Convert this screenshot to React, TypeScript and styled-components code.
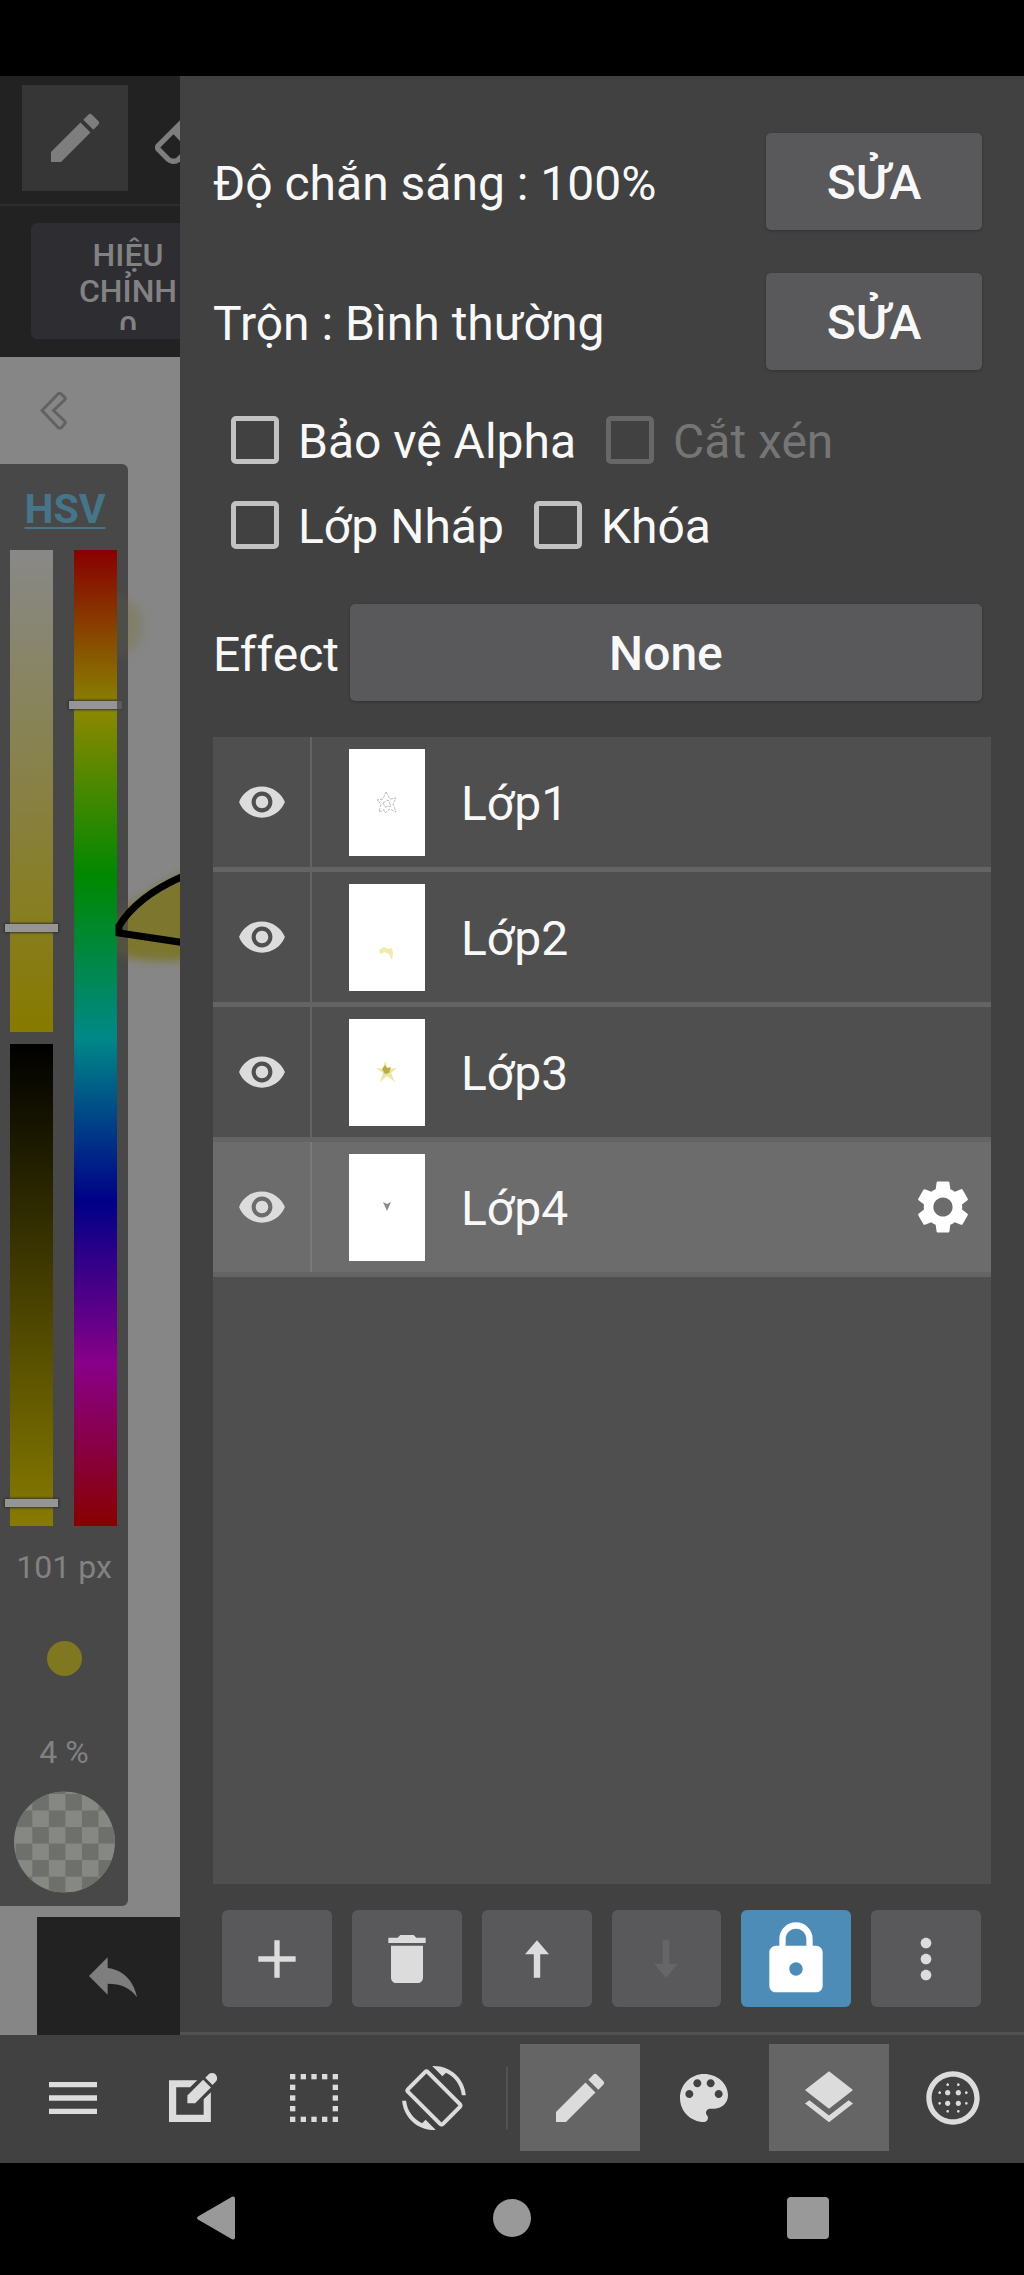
import React from "react";
import styled, { createGlobalStyle, css } from "styled-components";
import {
  MdAdd,
  MdBlurCircular,
  MdDelete,
  MdEdit,
  MdLayers,
  MdLock,
  MdMenu,
  MdMoreVert,
  MdReply,
  MdScreenRotation,
  MdSettings,
  MdVisibility,
} from "react-icons/md";

const GlobalStyle = createGlobalStyle`
  *, *::before, *::after { box-sizing: border-box; }
  body { margin: 0; background: #000; }
  button { border: 0; padding: 0; margin: 0; background: none; color: inherit; font: inherit; cursor: pointer; }
  input { margin: 0; }
  svg { display: block; flex: none; }
`;

const Screen = styled.div`
  display: flex;
  flex-direction: column;
  min-height: 100vh;
  background: #000;
  color: #f8f8f8;
  font-family: Roboto, "Noto Sans", sans-serif;
  font-size: 48px;
  line-height: 56px;
`;

const StatusBar = styled.div`
  height: 76px;
`;

const Workspace = styled.main`
  flex: 1;
  display: flex;
`;

/* ---------- dimmed canvas side ---------- */

const CanvasSide = styled.section`
  flex: none;
  width: 180px;
  display: flex;
  flex-direction: column;
  overflow: hidden;
  background: #868686;
  color: #828282;
  font-size: 32px;
  line-height: 38px;
`;

const ToolStrip = styled.div`
  display: flex;
  padding: 9px 0 13px 22px;
  background: #222;
  border-bottom: 2px solid #2d2d2d;
`;

const DimTool = styled.button<{ $active?: boolean }>`
  flex: none;
  display: grid;
  place-items: center;
  width: 106px;
  height: 106px;
  background: ${(p) => (p.$active ? "#363636" : "transparent")};
  color: #7e7e7e;
`;

const OptionStrip = styled.div`
  padding: 17px 0 18px 31px;
  background: #222;
`;

const AdjustButton = styled.button`
  display: block;
  width: 194px;
  height: 116px;
  padding: 14px 42px 9px;
  border-radius: 6px;
  background: #2e2e32;
  font-weight: 500;
  line-height: 36px;
`;

const AdjustText = styled.span`
  display: block;
  height: 93px;
  overflow: hidden;
`;

const Canvas = styled.div`
  flex: 1;
  position: relative;
  display: flex;
  flex-direction: column;
  align-items: flex-start;
`;

const Sketch = styled.svg`
  position: absolute;
  left: 0;
  top: 0;
  pointer-events: none;
`;

const CollapseButton = styled.button`
  padding: 34px 40px;
`;

const ColorPanel = styled.div`
  display: flex;
  flex-direction: column;
  align-items: center;
  width: 128px;
  padding: 20px 0 13px;
  border-radius: 0 6px 6px 0;
  background: #484848;
`;

const ModeButton = styled.button`
  padding-left: 2px;
  color: #46758a;
  font-size: 41px;
  font-weight: 700;
  line-height: 50px;
  text-decoration: underline;
  text-decoration-thickness: 2px;
  text-underline-offset: 4px;
`;

const Sliders = styled.div`
  display: flex;
  gap: 11px;
  height: 976px;
  margin: 16px 0 22px;
  padding-right: 2px;
`;

const SliderColumn = styled.div`
  display: flex;
  flex-direction: column;
  gap: 12px;
`;

const thumb = css`
  appearance: none;
  width: 53px;
  height: 8px;
  border: 0;
  border-radius: 0;
  background: #959595;
  box-shadow: 0 0 2px 1px #333;
`;

const ColorSlider = styled.input<{ $ramp: string }>`
  appearance: none;
  writing-mode: vertical-lr;
  flex: 1;
  width: 53px;
  min-height: 0;
  background: linear-gradient(${(p) => p.$ramp}) center / 43px 100% no-repeat;
  &::-webkit-slider-thumb {
    ${thumb}
  }
`;

const BrushDot = styled.span`
  width: 35px;
  height: 35px;
  margin: 55px 0 57px;
  border-radius: 50%;
  background: #7f7820;
`;

const Swatch = styled.button`
  margin-top: 20px;
`;

const UndoButton = styled.button`
  flex: 1;
  display: grid;
  place-items: center;
  width: 151px;
  min-height: 118px;
  margin: 11px 0 0 37px;
  background: #222;
  color: #7e7e7e;
`;

/* ---------- layers panel ---------- */

const LayersPanel = styled.section`
  flex: 1;
  display: flex;
  flex-direction: column;
  padding: 57px 33px 25px;
  border-bottom: 3px solid #525252;
  background: #414141;
`;

const Text = styled.span`
  padding-top: 4px;
`;

const SettingRow = styled.div`
  display: flex;
  align-items: center;
  justify-content: space-between;
  margin-bottom: 43px;
  padding-right: 9px;
`;

const FlatButton = styled.button`
  width: 216px;
  height: 97px;
  padding-top: 2px;
  border-radius: 5px;
  background: #59595b;
  box-shadow: 0 1px 3px rgba(0, 0, 0, 0.25);
  font-weight: 500;
`;

const Checks = styled.div`
  display: flex;
  flex-direction: column;
  margin: -16px 0 37px;
  padding-left: 18px;
`;

const CheckRow = styled.div`
  display: flex;
  gap: 30px;
  height: 85px;
`;

const Check = styled.label<{ $off?: boolean }>`
  display: flex;
  align-items: center;
  gap: 19px;
  color: ${(p) => (p.$off ? "#757575" : "inherit")};
`;

const Box = styled.input`
  appearance: none;
  width: 48px;
  height: 48px;
  border: 5px solid #c2c2c2;
  border-radius: 5px;
  &:disabled {
    border-color: #676767;
  }
`;

const EffectRow = styled.div`
  display: flex;
  align-items: center;
  gap: 11px;
  margin-bottom: 36px;
  padding-right: 9px;
`;

const EffectButton = styled(FlatButton)`
  flex: 1;
`;

const LayerList = styled.ul`
  flex: 1;
  margin: 0 0 26px;
  padding: 0;
  list-style: none;
  background: #4f4f4f;
`;

const LayerRow = styled.li<{ $selected: boolean }>`
  display: flex;
  align-items: center;
  height: 135px;
  border-bottom: 5px solid #646464;
  background: ${(p) => (p.$selected ? "#6c6c6c" : "transparent")};
`;

const EyeButton = styled.button<{ $selected: boolean }>`
  display: grid;
  place-items: center;
  align-self: stretch;
  width: 99px;
  border-right: 2px solid ${(p) => (p.$selected ? "#7a7a7a" : "#646464")};
  color: #dcdcdc;
`;

const Thumb = styled.svg`
  margin: 0 36px 0 37px;
  background: #fff;
`;

const LayerName = styled(Text)`
  flex: 1;
`;

const GearButton = styled.button`
  margin-right: 16px;
  color: #fff;
`;

const Actions = styled.div`
  display: grid;
  grid-template-columns: repeat(6, 1fr);
  gap: 20px;
  padding: 0 10px 0 9px;
`;

const ActionButton = styled.button<{ $on?: boolean }>`
  display: grid;
  place-items: center;
  height: 97px;
  border-radius: 6px;
  background: ${(p) => (p.$on ? "#4e8cb8" : "#59595b")};
  color: ${(p) => (p.$on ? "#fff" : "#dcdcdc")};
  &:disabled {
    color: #666668;
  }
`;

/* ---------- bottom bars ---------- */

const BottomBar = styled.nav`
  display: flex;
  align-items: center;
  height: 128px;
  padding: 0 11px 3px 13px;
  background: #414141;
  color: #dcdcdc;
`;

const ToolGroup = styled.div<{ $gap?: number }>`
  flex: 1 1 auto;
  display: flex;
  gap: ${(p) => p.$gap ?? 0}px;
`;

const ToolButton = styled.button<{ $active?: boolean }>`
  flex: 1 1 118px;
  display: grid;
  place-items: center;
  height: 107px;
  background: ${(p) => (p.$active ? "#656565" : "transparent")};
`;

const Divider = styled.span`
  width: 2px;
  height: 62px;
  margin: 0 12px;
  background: #525252;
`;

const SystemNav = styled.nav`
  display: flex;
  height: 112px;
  padding: 0 68px 2px;
  color: #999;
`;

const SystemButton = styled.button`
  flex: 1;
  display: grid;
  place-items: center;
`;

const ICON = 64;

const Glyph = ({ children }: { children: React.ReactNode }) => (
  <svg width={ICON} height={ICON} viewBox="0 0 24 24" fill="currentColor">
    {children}
  </svg>
);

const Eraser = () => (
  <Glyph>
    <path d="M16.24 3.56l4.95 4.94c.78.79.78 2.05 0 2.84L12 20.53a4 4 0 0 1-5.66 0L2.81 17c-.78-.79-.78-2.05 0-2.84l10.6-10.6c.79-.78 2.05-.78 2.83 0M4.22 15.58l3.54 3.53c.78.79 2.04.79 2.83 0l3.53-3.53-4.95-4.95z" />
  </Glyph>
);

const ArrowUp = () => (
  <Glyph>
    <path d="M12 5l4.5 5.2h-3.3V19h-2.4v-8.8H7.5z" />
  </Glyph>
);

const ArrowDown = () => (
  <Glyph>
    <path d="M12 19l4.5-5.2h-3.3V5h-2.4v8.8H7.5z" />
  </Glyph>
);

const EditSquare = () => (
  <Glyph>
    <path d="M3 5.3h10.6l-2.7 2.7H5.7v10.3h10.3v-5.800l2.700-2.700V21H3z" />
    <path d="M9.900 11.100l5.900-5.900 2.900 2.900-5.900 5.900H9.900z" />
    <path d="M16.600 4.400l1.200-1.200a1.900 1.900 0 0 1 2.700 2.700l-1.200 1.200z" />
  </Glyph>
);

const Palette = () => (
  <Glyph>
    <path d="M12 3c-4.970 0-9 4.030-9 9s4.030 9 9 9c.83 0 1.500-.67 1.500-1.500 0-.39-.15-.74-.39-1.010-.23-.26-.38-.61-.38-.99 0-.83.67-1.500 1.500-1.500H16c2.760 0 5-2.240 5-5 0-4.420-4.030-8-9-8zm-5.500 9c-.83 0-1.500-.67-1.500-1.500S5.670 9 6.500 9 8 9.670 8 10.500 7.330 12 6.500 12zm3-4C8.670 8 8 7.330 8 6.500S8.670 5 9.500 5s1.500.67 1.500 1.500S10.330 8 9.500 8zm5 0c-.83 0-1.500-.67-1.500-1.500S13.670 5 14.500 5s1.500.67 1.500 1.500S15.330 8 14.500 8zm3 4c-.83 0-1.500-.67-1.500-1.500S16.670 9 17.500 9s1.500.67 1.500 1.500-.67 1.500-1.500 1.500z" />
  </Glyph>
);

const steps = [0, 1, 2, 3, 4];
const Marquee = () => (
  <Glyph>
    {steps.flatMap((r) =>
      steps
        .filter((c) => r === 0 || r === 4 || c === 0 || c === 4)
        .map((c) => <rect key={`${r}-${c}`} x={3 + c * 4} y={3 + r * 4} width="2" height="2" />)
    )}
  </Glyph>
);

const checker: [number, number][] = [];
for (let r = 0; r < 7; r++) for (let c = 0; c < 7; c++) if ((r + c) % 2 === 0) checker.push([r, c]);

const Transparency = () => (
  <svg width="101" height="102" viewBox="0 0 102 102">
    <clipPath id="round">
      <circle cx="51" cy="51" r="51" />
    </clipPath>
    <g clipPath="url(#round)">
      <rect width="102" height="102" fill="#868883" />
      {checker.map(([r, c]) => (
        <rect key={`${r}-${c}`} x={1.8 + c * 16.7} y={2.5 + (r - 1) * 16.7} width="16.7" height="16.7" fill="#6e706b" />
      ))}
    </g>
  </svg>
);

const art: Record<string, React.ReactNode> = {
  "Lớp1": (
    <path
      d="M37 43l4 7 6-1-3 6 3 8-6-3-5 4-1-3-5 2 2-8-4-4 6-1zM34 54l5-3 3 6-6 1z"
      fill="none"
      stroke="#bdbdbd"
      strokeWidth="1"
      strokeDasharray="3 1"
    />
  ),
  "Lớp2": <path d="M30 66l5-3 4 2 4-1 1 5-1 7-3-6-4-2-5 2z" fill="#f3eba9" />,
  "Lớp3": (
    <>
      <path d="M36 42l3 8 9-1-6 5 4 9-8-6-7 6 3-9-7-5 7 1z" fill="#ece7a0" />
      <path d="M36 46l2 3 4-1-2 6-4 1-3-5z" fill="#b7ae45" />
    </>
  ),
  "Lớp4": <path d="M34 48l4 2 4-2-4 9z" fill="#8b8b8b" />,
};

const layers = ["Lớp1", "Lớp2", "Lớp3", "Lớp4"];

export default function App() {
  return (
    <Screen>
      <GlobalStyle />
      <StatusBar />
      <Workspace>
        <CanvasSide>
          <ToolStrip>
            <DimTool $active aria-label="Bút">
              <MdEdit size={ICON} />
            </DimTool>
            <DimTool aria-label="Tẩy">
              <Eraser />
            </DimTool>
          </ToolStrip>
          <OptionStrip>
            <AdjustButton>
              <AdjustText>HIỆU CHỈNH 0</AdjustText>
            </AdjustButton>
          </OptionStrip>
          <Canvas>
            <CollapseButton aria-label="Thu gọn">
              <svg width="28" height="39" viewBox="0 0 28 39">
                <path
                  d="M2 19.5L18 3q1.500-1.500 3 0l3.500 3q1.500 1.500 0 3L13.500 19.500l11 10.500q1.500 1.500 0 3L21.500 36.500q-1.500 1.500-3.500 0z"
                  fill="#868686"
                  stroke="#626262"
                  strokeWidth="3"
                />
              </svg>
            </CollapseButton>
            <ColorPanel>
              <ModeButton>HSV</ModeButton>
              <Sliders>
                <SliderColumn>
                  <ColorSlider type="range" aria-label="Độ bão hòa" defaultValue={79} $ramp="#888, #877a00" />
                  <ColorSlider type="range" aria-label="Độ sáng" defaultValue={96} $ramp="#000, #877b00" />
                </SliderColumn>
                <SliderColumn>
                  <ColorSlider
                    type="range"
                    aria-label="Sắc độ"
                    max={360}
                    defaultValue={56}
                    $ramp="#800, #880, #080, #088, #008, #808, #800"
                  />
                </SliderColumn>
              </Sliders>
              <span>101 px</span>
              <BrushDot />
              <span>4 %</span>
              <Swatch aria-label="Độ trong suốt">
                <Transparency />
              </Swatch>
            </ColorPanel>
            <UndoButton aria-label="Hoàn tác">
              <MdReply size={ICON} />
            </UndoButton>
            <Sketch width="181" height="700" viewBox="0 0 181 700">
              <defs>
                <filter id="soft" x="-30%" y="-30%" width="160%" height="160%">
                  <feGaussianBlur stdDeviation="4" />
                </filter>
                <clipPath id="visible">
                  <rect x="117" y="0" width="64" height="700" />
                </clipPath>
              </defs>
              <g clipPath="url(#visible)">
                <circle cx="112" cy="269" r="31" fill="#7d7850" opacity="0.5" filter="url(#soft)" />
                <path d="M108 566Q140 536 200 508V602Q140 608 108 594z" fill="#7c7426" opacity="0.9" filter="url(#soft)" />
                <rect x="117" y="200" width="11" height="450" fill="#484848" opacity="0.75" />
              </g>
              <path d="M186 518Q138 538 119 569V576L186 586" fill="none" stroke="#000" strokeWidth="7" />
            </Sketch>
          </Canvas>
        </CanvasSide>

        <LayersPanel>
          <SettingRow>
            <Text>Độ chắn sáng : 100%</Text>
            <FlatButton>SỬA</FlatButton>
          </SettingRow>
          <SettingRow>
            <Text>Trộn : Bình thường</Text>
            <FlatButton>SỬA</FlatButton>
          </SettingRow>
          <Checks>
            <CheckRow>
              <Check>
                <Box type="checkbox" />
                <Text>Bảo vệ Alpha</Text>
              </Check>
              <Check $off>
                <Box type="checkbox" disabled />
                <Text>Cắt xén</Text>
              </Check>
            </CheckRow>
            <CheckRow>
              <Check>
                <Box type="checkbox" />
                <Text>Lớp Nháp</Text>
              </Check>
              <Check>
                <Box type="checkbox" />
                <Text>Khóa</Text>
              </Check>
            </CheckRow>
          </Checks>
          <EffectRow>
            <Text id="effect">Effect</Text>
            <EffectButton aria-describedby="effect">None</EffectButton>
          </EffectRow>
          <LayerList>
            {layers.map((name) => {
              const selected = name === "Lớp4";
              return (
                <LayerRow key={name} $selected={selected}>
                  <EyeButton $selected={selected} aria-label={`Hiện ${name}`}>
                    <MdVisibility size={50} />
                  </EyeButton>
                  <Thumb width="76" height="107" viewBox="0 0 76 107">
                    {art[name]}
                  </Thumb>
                  <LayerName>{name}</LayerName>
                  {selected && (
                    <GearButton aria-label="Cài đặt lớp">
                      <MdSettings size={ICON} />
                    </GearButton>
                  )}
                </LayerRow>
              );
            })}
          </LayerList>
          <Actions>
            <ActionButton aria-label="Thêm">
              <MdAdd size={ICON} />
            </ActionButton>
            <ActionButton aria-label="Xóa">
              <MdDelete size={ICON} />
            </ActionButton>
            <ActionButton aria-label="Lên">
              <ArrowUp />
            </ActionButton>
            <ActionButton aria-label="Xuống" disabled>
              <ArrowDown />
            </ActionButton>
            <ActionButton $on aria-label="Khóa lớp">
              <MdLock size={80} />
            </ActionButton>
            <ActionButton aria-label="Thêm tùy chọn">
              <MdMoreVert size={ICON} />
            </ActionButton>
          </Actions>
        </LayersPanel>
      </Workspace>

      <BottomBar>
        <ToolGroup>
          <ToolButton aria-label="Menu">
            <MdMenu size={ICON} />
          </ToolButton>
          <ToolButton aria-label="Sửa">
            <EditSquare />
          </ToolButton>
          <ToolButton aria-label="Vùng chọn">
            <Marquee />
          </ToolButton>
          <ToolButton aria-label="Xoay">
            <MdScreenRotation size={ICON} />
          </ToolButton>
        </ToolGroup>
        <Divider />
        <ToolGroup $gap={4}>
          <ToolButton $active aria-label="Cọ">
            <MdEdit size={ICON} />
          </ToolButton>
          <ToolButton aria-label="Màu">
            <Palette />
          </ToolButton>
          <ToolButton $active aria-label="Lớp">
            <MdLayers size={ICON} />
          </ToolButton>
          <ToolButton aria-label="Chất liệu">
            <MdBlurCircular size={ICON} />
          </ToolButton>
        </ToolGroup>
      </BottomBar>

      <SystemNav>
        <SystemButton aria-label="Quay lại">
          <svg width="40" height="44" viewBox="0 0 40 44">
            <path d="M2 20.5L36 .8q3-1 3 2v38.4q0 3-3 2L2 23.5q-2-1.5 0-3z" fill="currentColor" />
          </svg>
        </SystemButton>
        <SystemButton aria-label="Trang chủ">
          <svg width="38" height="38" viewBox="0 0 38 38">
            <circle cx="19" cy="19" r="19" fill="currentColor" />
          </svg>
        </SystemButton>
        <SystemButton aria-label="Gần đây">
          <svg width="42" height="42" viewBox="0 0 42 42">
            <rect width="42" height="42" rx="4" fill="currentColor" />
          </svg>
        </SystemButton>
      </SystemNav>
    </Screen>
  );
}
